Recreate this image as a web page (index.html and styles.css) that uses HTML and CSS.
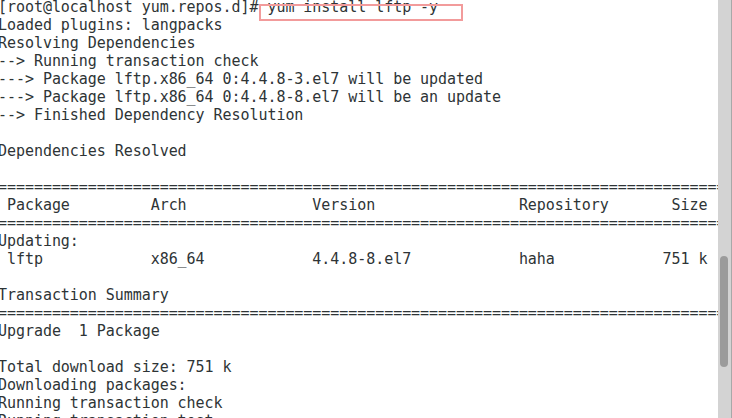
FILE: index.html
```html
<!DOCTYPE html>
<html>
<head>
<meta charset="utf-8">
<link rel="stylesheet" href="styles.css">
</head>
<body>
<div class="window">
<pre class="term">[root@localhost yum.repos.d]# <span class="mark">yum install lftp -y</span>
Loaded plugins: langpacks
Resolving Dependencies
--> Running transaction check
---> Package lftp.x86_64 0:4.4.8-3.el7 will be updated
---> Package lftp.x86_64 0:4.4.8-8.el7 will be an update
--> Finished Dependency Resolution

Dependencies Resolved

==================================================================================
 Package         Arch              Version                Repository       Size
==================================================================================
Updating:
 lftp            x86_64            4.4.8-8.el7            haha            751 k

Transaction Summary
==================================================================================
Upgrade  1 Package

Total download size: 751 k
Downloading packages:
Running transaction check
Running transaction test
</pre>
<div class="scrollbar"><div class="thumb"></div></div>
</div>
</body>
</html>
```
FILE: styles.css
```css
html, body {
  margin: 0;
  padding: 0;
  background: #ffffff;
  overflow: hidden;
}
.window {
  display: flex;
  width: 732px;
  height: 418px;
  overflow: hidden;
}
.term {
  flex: 1;
  margin: -2px 0 0 -2px;
  font-family: "DejaVu Sans Mono", monospace;
  font-size: 15px;
  letter-spacing: -0.05px;
  line-height: 18px;
  color: #2e3436;
  white-space: pre;
  overflow: hidden;
}
.mark {
  position: relative;
}
.mark::after {
  content: "";
  position: absolute;
  left: -8px;
  top: 6px;
  width: 200px;
  height: 13px;
  border: 2px solid #f29b9b;
}
.scrollbar {
  width: 13px;
  flex: none;
  background: #d3d3d3;
  border-right: 1px solid #a8a8a8;
  position: relative;
}
.thumb {
  position: absolute;
  left: 2px;
  top: 256px;
  width: 8px;
  height: 111px;
  border-radius: 4px;
  background: #9b9b9b;
}
```
